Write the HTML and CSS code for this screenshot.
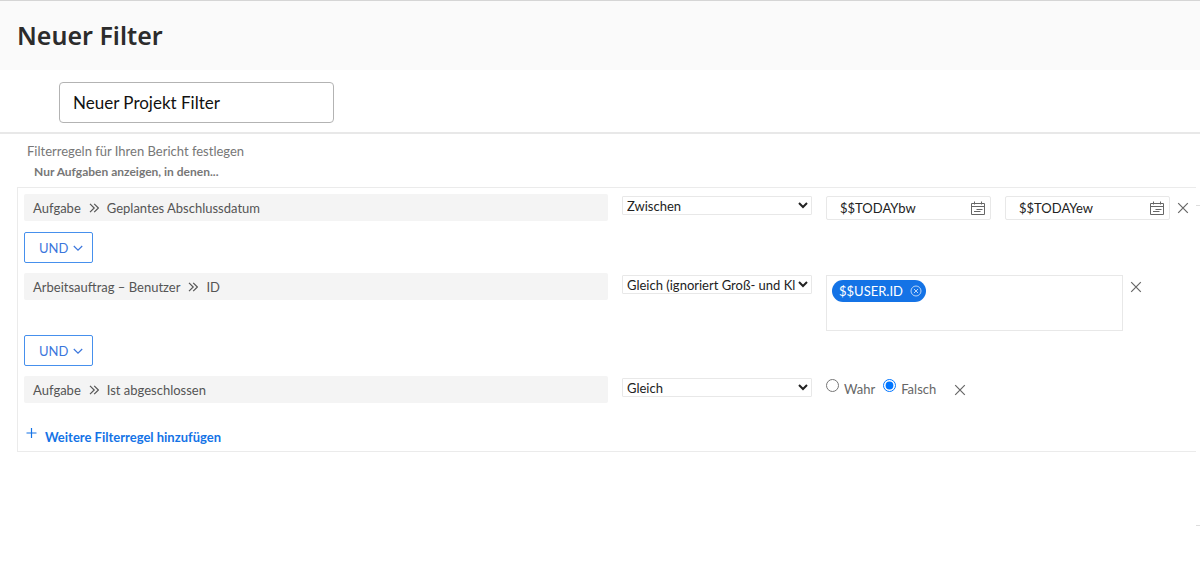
FILE: index.html
```
<!DOCTYPE html>
<html lang="de">
<head>
<meta charset="utf-8">
<meta name="viewport" content="width=device-width, initial-scale=1">
<title>Neuer Filter</title>
<link rel="stylesheet" href="styles.css">
</head>
<body>
<svg class="sprite" aria-hidden="true">
  <symbol id="double" viewBox="0 0 10 10"><path d="M1 .8L5.200 5 1 9.200M5.200.8L9.400 5 5.200 9.200"/></symbol>
  <symbol id="down" viewBox="0 0 10 10"><path d="M.8 3L5 7.200 9.200 3"/></symbol>
  <symbol id="close" viewBox="0 0 12 12"><path d="M1.200 1.200l9.600 9.600M10.800 1.200l-9.600 9.600"/></symbol>
  <symbol id="calendar" viewBox="0 0 16 16"><path d="M1.500 3.500h13v11h-13zM1.500 6.500h13M4.500 1.500v3M11.500 1.500v3M6.500 9.500h6M4 11.500h6.500"/></symbol>
  <symbol id="remove" viewBox="0 0 12 12"><circle cx="6" cy="6" r="5"/><path d="M4 4l4 4M8 4l-4 4"/></symbol>
  <symbol id="plus" viewBox="0 0 12 12"><path d="M5.500 1v10M.5 6h10"/></symbol>
</svg>
<header class="page-header"><h1>Neuer Filter</h1></header>
<div class="name-bar">
  <input class="name-input" type="text" aria-label="Filtername" value="Neuer Projekt Filter">
</div>
<main class="content">
  <section class="builder">
    <h2 class="heading">Filterregeln für Ihren Bericht festlegen</h2>
    <p class="subheading">Nur Aufgaben anzeigen, in denen...</p>
    <div class="rules">
      <div class="rule">
        <div class="field"><span>Aufgabe</span><svg class="icon double"><use href="#double"/></svg><span>Geplantes Abschlussdatum</span></div>
        <select class="operator" aria-label="Bedingung Abschlussdatum"><option>Zwischen</option></select>
        <div class="values">
          <div class="date"><input type="text" aria-label="Von" value="$$TODAYbw"><button type="button" class="plain" aria-label="Startdatum wählen"><svg class="icon calendar"><use href="#calendar"/></svg></button></div>
          <div class="date"><input type="text" aria-label="Bis" value="$$TODAYew"><button type="button" class="plain" aria-label="Enddatum wählen"><svg class="icon calendar"><use href="#calendar"/></svg></button></div>
          <button type="button" class="plain delete" aria-label="Regel entfernen"><svg class="icon close"><use href="#close"/></svg></button>
        </div>
      </div>
      <button type="button" class="connector">UND<svg class="icon down"><use href="#down"/></svg></button>
      <div class="rule rule-tall">
        <div class="field"><span>Arbeitsauftrag – Benutzer</span><svg class="icon double"><use href="#double"/></svg><span>ID</span></div>
        <select class="operator" aria-label="Bedingung ID"><option>Gleich (ignoriert Groß- und Kleinschreibung)</option></select>
        <div class="values">
          <div class="tokens"><span class="token">$$USER.ID<button type="button" class="plain" aria-label="$$USER.ID entfernen"><svg class="icon remove"><use href="#remove"/></svg></button></span></div>
          <button type="button" class="plain delete" aria-label="Regel entfernen"><svg class="icon close"><use href="#close"/></svg></button>
        </div>
      </div>
      <button type="button" class="connector">UND<svg class="icon down"><use href="#down"/></svg></button>
      <div class="rule">
        <div class="field"><span>Aufgabe</span><svg class="icon double"><use href="#double"/></svg><span>Ist abgeschlossen</span></div>
        <select class="operator" aria-label="Bedingung Ist abgeschlossen"><option>Gleich</option></select>
        <div class="values choices">
          <label class="choice"><input type="radio" name="done"><span>Wahr</span></label>
          <label class="choice"><input type="radio" name="done" checked><span>Falsch</span></label>
          <button type="button" class="plain delete" aria-label="Regel entfernen"><svg class="icon close"><use href="#close"/></svg></button>
        </div>
      </div>
      <a class="add" href="#"><svg class="icon plus"><use href="#plus"/></svg><span>Weitere Filterregel hinzufügen</span></a>
    </div>
  </section>
  <div class="side-edge"></div>
</main>
</body>
</html>
```
FILE: styles.css
```
* { box-sizing: border-box; }
body {
  margin: 0;
  background: #fff;
  color: #555;
  font: 13px/20px "Proxima Nova", Lato, sans-serif;
}
h1, h2, p { margin: 0; }
input, select, button { font: inherit; }
.sprite { position: absolute; width: 0; height: 0; }
.icon { display: block; flex: none; fill: none; stroke: currentColor; stroke-width: 1.2; }
.plain { display: block; padding: 0; border: 0; background: none; color: #666; }

.page-header { padding: 15px 17px; border-top: 1px solid #d5d5d5; background: #fafafa; }
.page-header h1 { color: #2c2c2c; font: 600 25px/39px "Source Sans Pro", "Noto Sans", sans-serif; }
.name-bar { padding: 12px 59px 9px; border-bottom: 2px solid #e8e8e8; }
.name-input {
  display: block;
  width: 275px;
  max-width: 100%;
  height: 41px;
  padding: 0 13px;
  border: 1px solid #b3b3b3;
  border-radius: 4px;
  color: #111;
  font-size: 17px;
}

.content { display: flex; }
.builder { flex: 1; min-width: 0; padding: 7px 0 0 17px; }
.side-edge { width: 4px; height: 321px; margin-top: 71px; border: solid #ddd; border-width: 1px 0; }
.heading { padding-left: 10px; color: #777; font-size: 13px; font-weight: 400; line-height: 20px; }
.subheading { padding: 1px 17px 5px; color: #777; font-size: 12px; font-weight: 700; }

.rules { padding: 6px 7px 4px 6px; border: solid #ebebeb; border-width: 1px 0 1px 1px; }
.rule { display: grid; grid-template-columns: minmax(0, 1fr) 190px 363px; gap: 14px; align-items: start; }
.field { display: flex; align-items: center; gap: 8px; height: 27px; padding: 0 9px; border-radius: 2px; background: #f4f4f4; }
.double { width: 10px; height: 10px; }
.operator { width: 100%; height: 19px; margin-top: 2px; padding: 0; border: 1px solid #e8e8e8; border-radius: 1px; background: #fff; color: #222; line-height: normal; }
.values { display: flex; align-items: flex-start; padding-top: 2px; }
.date { display: flex; align-items: center; width: 165px; height: 24px; margin-right: 14px; padding: 0 4px 0 13px; border: 1px solid #e8e8e8; border-radius: 2px; }
.date input { flex: 1; min-width: 0; padding: 0; border: 0; color: #222; }
.calendar { width: 16px; height: 16px; stroke-width: 1; }
.values .delete { margin-top: 6px; }
.date + .delete { margin-left: -7px; }
.close { width: 12px; height: 12px; }
.tokens { display: flex; align-items: flex-start; width: 297px; height: 56px; margin-right: 7px; padding: 4px 5px; border: 1px solid #e8e8e8; }
.token { display: flex; align-items: center; gap: 7px; height: 22px; padding: 0 4px 0 7px; border-radius: 11px; background: #1473e6; color: #fff; line-height: 18px; }
.token .plain { color: #b9d5f8; }
.remove { width: 12px; height: 12px; stroke-width: 1; }
.choices { gap: 8px; }
.choice { display: flex; align-items: flex-start; gap: 5px; }
.choice input { width: 13px; height: 13px; margin: 1px 0 0; }
.choice span { padding-top: 1px; color: #666; }
.choices .delete { margin-left: 10px; }

.connector {
  display: flex;
  align-items: center;
  gap: 5px;
  width: 69px;
  height: 31px;
  margin: 11px 0 10px;
  padding: 0 0 0 14px;
  border: 1px solid #4690ed;
  border-radius: 2px;
  background: #fff;
  color: #3b76dc;
}
.down { width: 10px; height: 10px; }
.rule-tall + .connector { margin-top: 4px; }
.add { display: inline-flex; align-items: flex-start; gap: 7px; margin: 20px 2px 0; color: #1473e6; font-weight: 700; text-decoration: none; }
.add span { padding-top: 4px; }
.plus { width: 12px; height: 12px; margin-top: 4px; }
```
